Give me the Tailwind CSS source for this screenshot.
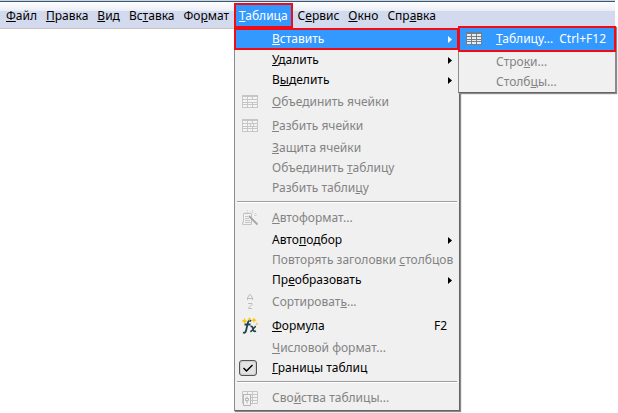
<!DOCTYPE html>
<html lang="ru">
<head>
<meta charset="utf-8">
<title>Таблица</title>
<script src="https://cdn.jsdelivr.net/npm/@tailwindcss/browser@4"></script>
</head>
<body class="min-h-screen bg-white font-['Noto_Sans','Open_Sans',sans-serif] text-[12px] leading-4 text-black">
<header class="relative mr-[3px] border-t border-[#c3d5ea]">
  <nav aria-label="Главное меню" class="flex h-7 items-stretch gap-px border-t border-b border-t-[#44546a] border-b-[#c6c0c0] bg-linear-to-b from-white from-0% via-[#e9edf6] via-35% to-[#d3daed] to-36% pt-px pl-0.5">
    <button class="px-1"><u>Ф</u>айл</button>
    <button class="px-1"><u>П</u>равка</button>
    <button class="px-1"><u>В</u>ид</button>
    <button class="px-1">Вс<u>т</u>авка</button>
    <button class="px-1">Фо<u>р</u>мат</button>
    <div class="relative flex">
      <button aria-expanded="true" class="border-2 border-[#f00c12] bg-[#3399ff] px-[3px] text-white"><u>Т</u>аблица</button>
      <div role="menu" class="absolute top-[25px] left-0 flex w-[226px] flex-col border border-t-0 border-[#8c8c8c] border-r-[#646464] border-b-[#646464] bg-[#f0f0f0] shadow-[1px_1px_1px_#8a8a8a]">
        <button role="menuitem" class="-ml-px flex h-[22px] items-center border-2 border-[#f00c12] bg-[#3399ff] pr-[5px] pl-9 text-white"><span class="grow text-left"><u>В</u>ставить</span><svg class="h-[7px] w-1" viewBox="0 0 4 7" fill="currentColor"><path d="M0 0L4 3.500L0 7Z"/></svg></button>
        <button role="menuitem" class="flex h-5 items-center pr-[7px] pl-[37px]"><span class="grow text-left"><u>У</u>далить</span><svg class="h-[7px] w-1" viewBox="0 0 4 7" fill="currentColor"><path d="M0 0L4 3.500L0 7Z"/></svg></button>
        <button role="menuitem" class="flex h-5 items-center pr-[7px] pl-[37px]"><span class="grow text-left">В<u>ы</u>делить</span><svg class="h-[7px] w-1" viewBox="0 0 4 7" fill="currentColor"><path d="M0 0L4 3.500L0 7Z"/></svg></button>
        <button role="menuitem" disabled class="flex h-6 items-center gap-[14px] pl-[7px] text-[#838383]">
          <svg class="h-4 w-4" viewBox="0 0 16 16"><path fill="#c6c6c6" d="M0 1h16v13H0z"/><path fill="#f4f4f4" d="M1 3h4v2H1zM6 3h4v2H6zM11 3h4v2h-4zM1 6h4v2H1zM6 6h9v2H6zM1 9h4v1H1zM6 9h4v1H6zM11 9h4v1h-4zM1 11h4v2H1zM6 11h4v2H6zM11 11h4v2h-4z"/></svg>
          <span><u>О</u>бъединить ячейки</span></button>
        <button role="menuitem" disabled class="flex h-6 items-center gap-[14px] pl-[7px] text-[#838383]">
          <svg class="h-4 w-4" viewBox="0 0 16 16"><path fill="#c6c6c6" d="M0 1h16v13H0z"/><path fill="#f4f4f4" d="M1 3h4v2H1zM6 3h4v2H6zM11 3h4v2h-4zM1 6h4v2H1zM6 6h2v2H6zM9 6h2v2H9zM12 6h3v2h-3zM1 9h4v1H1zM6 9h4v1H6zM11 9h4v1h-4zM1 11h4v2H1zM6 11h4v2H6zM11 11h4v2h-4z"/></svg>
          <span><u>Р</u>азбить ячейки</span></button>
        <button role="menuitem" disabled class="h-5 pl-[37px] text-left text-[#838383]"><u>З</u>ащита ячейки</button>
        <button role="menuitem" disabled class="h-5 pl-[37px] text-left text-[#838383]">Объединить <u>т</u>аблицу</button>
        <button role="menuitem" disabled class="h-5 pl-[37px] text-left text-[#838383]">Разбить табли<u>ц</u>у</button>
        <div role="separator" class="mx-0.5 my-[3px] h-0.5 border-t border-b border-t-[#9d9d9d] border-b-white"></div>
        <button role="menuitem" disabled class="flex h-6 items-center gap-[14px] pl-[7px] text-[#838383]">
          <svg class="h-4 w-4" viewBox="0 0 16 16" fill="none" stroke="#c4c4c4"><path fill="#f2f2f2" d="M1.500 3.500h8v11h-9v-2h1z"/><path d="M3 6.500h3M3 8.500h4M3 10.500h5M3 12.500h6"/><path stroke="#a4a4a4" stroke-width="1.800" d="M7 6l8.500 8.500"/><path stroke="#cfcfcf" stroke-dasharray="1 1" d="M5.500 0v4M3.500 2.500h4M10.500 0v4M8.500 2h4M13.500 3v3M12 5h3"/></svg>
          <span><u>А</u>втоформат...</span></button>
        <button role="menuitem" class="flex h-5 items-center pr-[7px] pl-[37px]"><span class="grow text-left">Авто<u>п</u>одбор</span><svg class="h-[7px] w-1" viewBox="0 0 4 7" fill="currentColor"><path d="M0 0L4 3.500L0 7Z"/></svg></button>
        <button role="menuitem" disabled class="h-5 pl-[37px] text-left whitespace-nowrap text-[#838383]">Повторять заголовки <u>с</u>толбцов</button>
        <button role="menuitem" class="flex h-5 items-center pr-[7px] pl-[37px]"><span class="grow text-left">Пр<u>е</u>образовать</span><svg class="h-[7px] w-1" viewBox="0 0 4 7" fill="currentColor"><path d="M0 0L4 3.500L0 7Z"/></svg></button>
        <button role="menuitem" disabled class="flex h-6 items-center gap-[14px] pl-[7px] text-[#838383]">
          <svg class="h-4 w-4" viewBox="0 0 16 16" fill="none" stroke="#bdbdbd"><path d="M5.500 6V4L7.500 .5h1L10.500 4v2M6 4.500h4M6 9.500h4v1L6.500 14v.5H10"/></svg>
          <span>Сортироват<u>ь</u>...</span></button>
        <button role="menuitem" class="flex h-6 items-center gap-[14px] pr-3 pl-[7px]">
          <svg class="h-4 w-4 overflow-visible" viewBox="0 0 16 16" fill="none"><path stroke="#24404f" stroke-width="1.800" d="M1 14.500c2 .8 2.800-.5 3.200-2.500L5.800 5c.4-1.900 1.400-2.800 3.500-2M2.500 6.500h6"/><path stroke="#24404f" stroke-width="1.700" d="M8.500 8.500c1.800-.6 2 .5 2.400 2.200s1 3.400 3.100 2.300M14 8.500c-2.500 0-3 5-5.800 5"/><path fill="#f6c60c" d="M2.500 0l1 2 2 1-2 1-1 2-1-2-2-1 2-1zM7.500-1l.7 1.500 1.300.7-1.300.6-.7 1.500-.7-1.500-1.300-.6 1.300-.7zM12-.5l.9 1.800 1.800.9-1.800.9-.9 1.800-.9-1.800-1.800-.9 1.800-.9zM14.800 4.500l.5 1 1 .5-1 .5-.5 1-.5-1-1-.5 1-.5z"/></svg>
          <span class="grow text-left"><u>Ф</u>ормула</span><span>F2</span></button>
        <button role="menuitem" disabled class="h-5 pl-[37px] text-left text-[#838383]"><u>Ч</u>исловой формат...</button>
        <label class="flex h-5 items-center gap-[15px] pl-1">
          <span class="relative flex h-4 w-[18px]">
            <input type="checkbox" checked class="h-4 w-[18px] appearance-none rounded-[3px] border border-[#555] bg-[#e4e4e4] shadow-[inset_0_0_2px_#999]">
            <svg class="pointer-events-none absolute top-[3px] left-1 h-[10px] w-[10px]" viewBox="0 0 10 10" fill="none" stroke="#000" stroke-width="1.500"><path d="M.5 5l3 3L9.500 2"/></svg>
          </span>
          <span><u>Г</u>раницы таблиц</span></label>
        <div role="separator" class="mx-0.5 my-[3px] h-0.5 border-t border-b border-t-[#9d9d9d] border-b-white"></div>
        <button role="menuitem" disabled class="flex h-6 items-center gap-[14px] pl-[7px] text-[#838383]">
          <svg class="h-4 w-4" viewBox="0 0 16 16" fill="none" stroke="#c6c6c6"><path fill="#f3f3f3" d="M.5 1.500h15v12H.5zM0 4.500h16M0 7.500h16M0 10.500h16M5.500 1v13M10.500 1v13"/><path fill="#f3f3f3" stroke="#b4b4b4" d="M1.500 4.500h7v11h-7z"/><path stroke="#b4b4b4" d="M3.500 8.500h3v2h-3zM5 6.500v2M5 10.500v3"/></svg>
          <span>Сво<u>й</u>ства таблицы...</span></button>
        <div role="menu" class="absolute top-[-2px] left-[223px] z-10 flex w-[158px] flex-col border-r border-b border-l border-[#8c8c8c] border-b-[#646464] bg-[#f0f0f0] shadow-[1px_1px_1px_#8a8a8a]">
          <button role="menuitem" class="-mx-px flex h-[26px] items-center border-2 border-[#f00c12] bg-[#3399ff] pr-2 pl-1.5 text-white">
            <svg class="mr-[14px] h-4 w-4" viewBox="0 0 16 16"><path fill="#71808a" d="M0 1h16v13H0z"/><path fill="#e9edf0" d="M1 3h4v2H1zM6 3h4v2H6zM11 3h4v2h-4zM1 6h4v2H1zM6 6h4v2H6zM11 6h4v2h-4zM1 9h4v1H1zM6 9h4v1H6zM11 9h4v1h-4zM1 11h4v2H1zM6 11h4v2H6zM11 11h4v2h-4z"/></svg>
            <span class="grow text-left"><u>Т</u>аблицу...</span><span>Ctrl+F12</span></button>
          <button role="menuitem" disabled class="h-5 pl-[37px] text-left text-[#838383]">Стро<u>к</u>и...</button>
          <button role="menuitem" disabled class="h-5 pl-[37px] text-left text-[#838383]">Столб<u>ц</u>ы...</button>
        </div>
      </div>
    </div>
    <button class="px-1">С<u>е</u>рвис</button>
    <button class="px-1"><u>О</u>кно</button>
    <button class="px-1">Спр<u>а</u>вка</button>
  </nav>
</header>
</body>
</html>
